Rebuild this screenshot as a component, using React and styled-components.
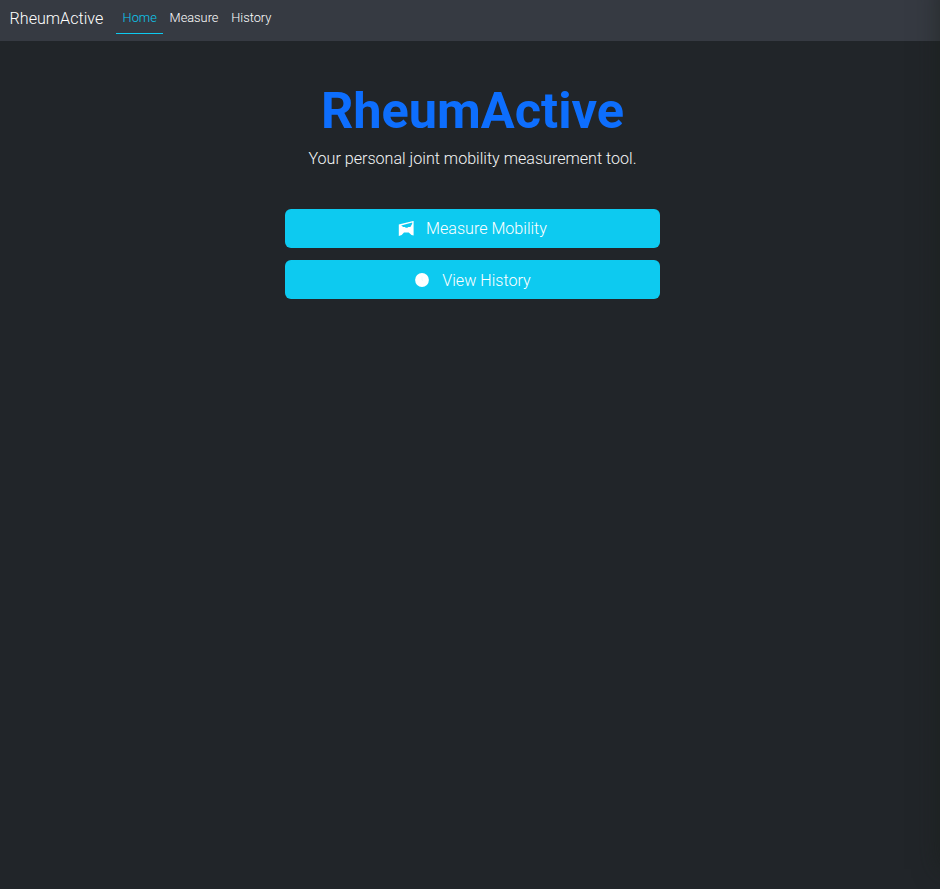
import React from "react";
import styled, { createGlobalStyle } from "styled-components";

const GlobalStyle = createGlobalStyle`
  *, *::before, *::after { box-sizing: border-box; }
  body {
    margin: 0;
    background: #212529;
    color: #f4f5f6;
    font-family: Roboto, "Liberation Sans", sans-serif;
    font-weight: 300;
    overflow: hidden;
  }
`;

const Page = styled.div`
  min-height: 100vh;
`;

const Navbar = styled.nav`
  display: flex;
  align-items: flex-start;
  height: 41px;
  padding: 2px 9.6px 0;
  background: #363a42;
`;

const Brand = styled.a`
  width: 106.6px;
  font-size: 16.1px;
  line-height: 33px;
  color: #fff;
  text-decoration: none;
`;

const NavLink = styled.a`
  height: 32px;
  padding: 0 6.4px;
  font-size: 12.8px;
  line-height: 32px;
  text-decoration: none;
  color: ${({ $active }) => ($active ? "#0dcaf0" : "#fff")};
  border-bottom: 1px solid ${({ $active }) => ($active ? "#0dcaf0" : "transparent")};
`;

const Main = styled.main`
  display: flex;
  flex-direction: column;
  align-items: center;
  width: 375px;
  margin: 0 0 0 285px;
  padding-top: 40px;
`;

const Title = styled.h1`
  margin: 0;
  font-size: 50.5px;
  line-height: 60px;
  font-weight: 700;
  color: #0d6efd;
`;

const Lead = styled.p`
  margin: 6px 0 38px;
  font-size: 16.1px;
  line-height: 24px;
`;

const Actions = styled.div`
  display: flex;
  flex-direction: column;
  gap: 12px;
  width: 100%;
`;

const ActionButton = styled.button`
  display: flex;
  align-items: center;
  justify-content: center;
  gap: 12px;
  height: 39px;
  padding: 0;
  border: 0;
  border-radius: 6px;
  background: #0dcaf0;
  color: #fff;
  font: inherit;
  font-size: 16.1px;
`;

const Label = styled.span`
  padding-top: ${({ $drop }) => $drop || 0}px;
`;

const Icon = styled.svg`
  display: block;
  width: 16px;
  height: 16px;
  fill: #fff;
`;

const SidePanel = styled.aside`
  position: fixed;
  top: -20px;
  left: 100%;
  width: 300px;
  height: 889px;
  box-shadow: 0 0 24px rgba(25, 30, 25, 0.6);
`;

export default function App() {
  return (
    <Page>
      <GlobalStyle />
      <Navbar>
        <Brand>RheumActive</Brand>
        <NavLink $active>Home</NavLink>
        <NavLink>Measure</NavLink>
        <NavLink>History</NavLink>
      </Navbar>
      <Main>
        <Title>RheumActive</Title>
        <Lead>Your personal joint mobility measurement tool.</Lead>
        <Actions>
          <ActionButton>
            <Icon viewBox="0 0 16 16">
              <path fillRule="evenodd" d="M.8 3.4 15.6-.1v14.7l-2.1-.6-2.8-2.6H6l-2.3 2.6-2.9 1.1ZM3.2 4.4 5.2 6h1.6l1 .8h1.6l1-.8h2L14.2 2.8V1.4Z" />
            </Icon>
            <Label>Measure Mobility</Label>
          </ActionButton>
          <ActionButton>
            <Icon viewBox="0 0 16 16">
              <circle cx="8" cy="8" r="6.9" />
              <path d="M8 4.5V8l1.2.8" fill="none" stroke="#d5f6fd" strokeWidth=".5" />
            </Icon>
            <Label $drop={2}>View History</Label>
          </ActionButton>
        </Actions>
      </Main>
      <SidePanel />
    </Page>
  );
}
